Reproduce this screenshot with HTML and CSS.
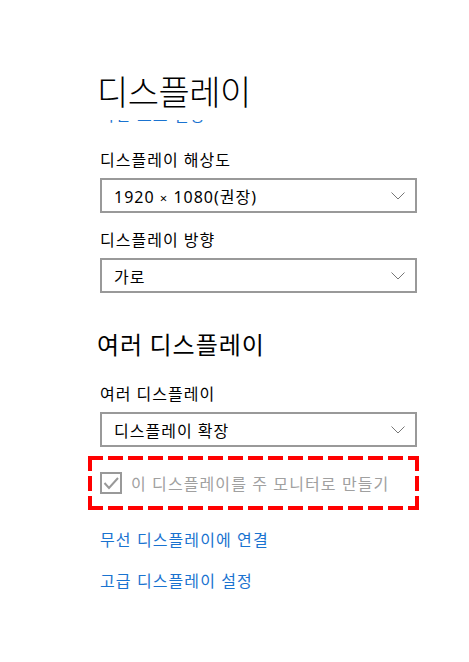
FILE: index.html
```html
<!DOCTYPE html>
<html>

<head>
	<link rel="stylesheet" href="styles.css">
</head>

<body>
	<div class="page">
		<h1>디스플레이</h1>
		<div class="clipped">
			<span class="link">야간 모드 설정</span>
		</div>

		<div class="field first">
			<div class="label">디스플레이 해상도</div>
			<div class="select">
				<span>1920 <span class="times">×</span> 1080(권장)</span>
				<svg class="chevron" width="14" height="8" viewBox="0 0 14 8"><polyline points="0.5,0.5 7,7 13.5,0.5" /></svg>
			</div>
		</div>

		<div class="field">
			<div class="label">디스플레이 방향</div>
			<div class="select">
				<span>가로</span>
				<svg class="chevron" width="14" height="8" viewBox="0 0 14 8"><polyline points="0.5,0.5 7,7 13.5,0.5" /></svg>
			</div>
		</div>

		<h2>여러 디스플레이</h2>

		<div class="field">
			<div class="label">여러 디스플레이</div>
			<div class="select">
				<span>디스플레이 확장</span>
				<svg class="chevron" width="14" height="8" viewBox="0 0 14 8"><polyline points="0.5,0.5 7,7 13.5,0.5" /></svg>
			</div>
		</div>

		<div class="highlight">
			<div class="check disabled">
				<svg class="box" width="22" height="22" viewBox="0 0 22 22">
					<rect x="1" y="1" width="20" height="20" />
					<polyline points="4.5,11 9,16 18,6" />
				</svg>
				<span>이 디스플레이를 주 모니터로 만들기</span>
			</div>
		</div>

		<div class="links">
			<a class="link">무선 디스플레이에 연결</a>
			<a class="link">고급 디스플레이 설정</a>
		</div>
	</div>
</body>

</html>
```

FILE: styles.css
```css
body {
	margin: 0;
	background-color: #fff;
	color: #000;
	font-family: "Noto Sans", "Noto Sans CJK KR", sans-serif;
}

.page {
	padding: 70px 0 0 100px;
	width: 317px;
}

h1 {
	margin: 4px 0 0 -3px;
	font-family: "Noto Sans CJK KR", sans-serif;
	font-size: 34px;
	font-weight: 300;
	line-height: 34px;
	letter-spacing: -0.5px;
}

/* link scrolled up under the title, only its foot shows */
.clipped {
	height: 4px;
	overflow: hidden;
	margin-top: 12px;
}

.clipped .link {
	display: block;
	margin-top: -11px;
	line-height: 12px;
}

.link {
	color: #1a73d0;
	font-size: 16px;
	letter-spacing: 1.1px;
}

.field {
	margin-top: 16px;
}

.field.first {
	margin-top: 25px;
}

.label {
	font-size: 16px;
	line-height: 22px;
	letter-spacing: 1px;
	margin-bottom: 7px;
}

.select {
	display: flex;
	align-items: center;
	justify-content: space-between;
	height: 31px;
	border: 2px solid #999;
	padding: 0 10px 0 12px;
	font-size: 16px;
	letter-spacing: 1px;
}

.select .times {
	font-size: 13px;
}

.chevron polyline {
	fill: none;
	stroke: #777;
	stroke-width: 1;
}

h2 {
	margin: 36px 0 24px -3px;
	font-family: "Noto Sans CJK KR", sans-serif;
	font-size: 24px;
	font-weight: 400;
	line-height: 30px;
	letter-spacing: 1px;
}

.highlight {
	margin: 9px 0 0 -12px;
	width: 331px;
	height: 54px;
	display: flex;
	align-items: center;
	background:
		repeating-linear-gradient(90deg, #f00 0 15px, transparent 15px 20px) left top / 100% 4px no-repeat,
		repeating-linear-gradient(90deg, #f00 0 15px, transparent 15px 20px) left bottom / 100% 4px no-repeat,
		repeating-linear-gradient(180deg, #f00 0 15px, transparent 15px 20px) left top / 4px 100% no-repeat,
		repeating-linear-gradient(180deg, #f00 0 15px, transparent 15px 20px) right top / 4px 100% no-repeat;
}

.check {
	display: flex;
	align-items: center;
	gap: 9px;
	margin-left: 12px;
	font-size: 16px;
	letter-spacing: 1.1px;
}

.check.disabled {
	color: #a0a0a0;
}

.check .box rect,
.check .box polyline {
	fill: none;
	stroke: #999;
	stroke-width: 2;
}

.links {
	display: flex;
	flex-direction: column;
	gap: 19px;
	margin-top: 19px;
}

.links .link {
	line-height: 22px;
}
```
